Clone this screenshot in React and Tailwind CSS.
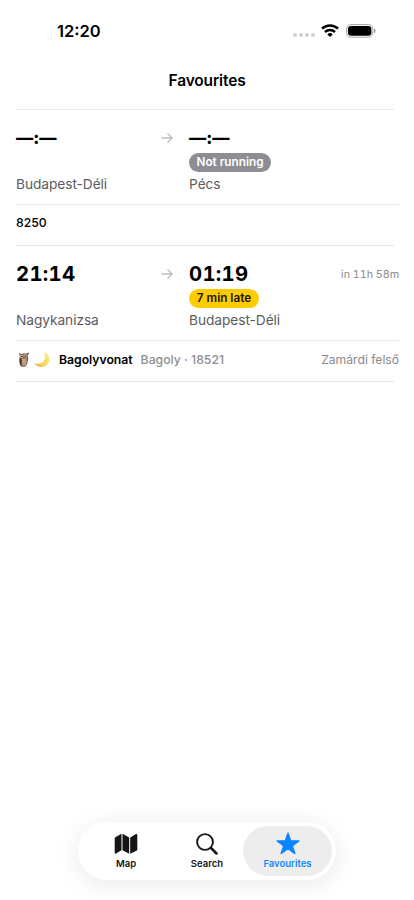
const trips = [
  {
    id: "8250",
    from: { place: "Budapest-Déli" },
    to: { place: "Pécs" },
    status: { text: "Not running", color: "bg-[#8e8d93] text-white", width: "w-[82px]" },
    number: "8250",
  },
  {
    id: "18521",
    from: { time: "21:14", place: "Nagykanizsa" },
    to: { time: "01:19", place: "Budapest-Déli" },
    status: { text: "7 min late", color: "bg-[#fecb00] text-[#1a1500]", width: "w-[70px]" },
    countdown: "in 11h 58m",
    name: "Bagolyvonat",
    line: "Bagoly · 18521",
    nextStop: "Zamárdi felső",
  },
];

function WifiIcon() {
  return (
    <svg className="h-[14px] w-[18px]" viewBox="0 0 18 14" fill="none" stroke="#000" strokeWidth="2.5">
      <path d="M1 4.700a11.500 11.500 0 0 1 16 0" />
      <path d="M4 8a7.200 7.200 0 0 1 10 0" />
      <path d="M9 12.900 6.300 10.400a3.800 3.800 0 0 1 5.400 0Z" fill="#000" stroke="none" />
    </svg>
  );
}

function BatteryIcon() {
  return (
    <svg className="h-[14px] w-[30px]" viewBox="0 0 30 14">
      <rect x="0.6" y="0.6" width="26.2" height="12.6" rx="4.2" fill="none" stroke="#a3a3a3" strokeWidth="1" />
      <rect x="2" y="2" width="23.4" height="9.8" rx="3" fill="#000" />
      <path d="M28 4.7c1 .3 1.5 1.1 1.5 2.2S29 8.8 28 9.1Z" fill="#999" />
    </svg>
  );
}

function ArrowIcon() {
  return (
    <svg
      className="h-3 w-3"
      viewBox="0 0 12 12"
      fill="none"
      stroke="#bdbdbf"
      strokeWidth="1.3"
      strokeLinecap="round"
      strokeLinejoin="round"
    >
      <path d="M.8 6h10.4M6.9 1.7 11.2 6l-4.3 4.3" />
    </svg>
  );
}

function OwlIcon() {
  return (
    <svg className="h-4 w-4" viewBox="0 0 16 16">
      <path d="m2.800 1.200 2.600.6 4.200-.4L13.200.6l-1.300 3.200c.6 2.400.3 6.400-1.500 9.400L7.500 15l-3.200-1.200c-1.200-2.800-1.200-6.600-.5-9.700Z" fill="#765b49" />
      <path d="M6 6.500h4.500c.4 2.600 0 5.200-1.300 7l-2.500.2c-1.200-2-1.300-4.700-.7-7.200Z" fill="#c4ab94" />
      <path d="M4 6.500c-.7 2.300-.3 5.200 1.200 7.300.5-2.500.6-5 .4-6.700Z" fill="#493a32" />
      <circle cx="5.9" cy="4.3" r="1.7" fill="#e6d3b5" />
      <circle cx="9.8" cy="4" r="1.7" fill="#e6d3b5" />
      <circle cx="6" cy="4.3" r=".9" fill="#2b1d17" />
      <circle cx="9.7" cy="4.1" r=".9" fill="#2b1d17" />
      <path d="m7.300 4.800.7 1.500.6-1.500Z" fill="#34261f" />
      <path d="M6.300 8.500h.8M8.500 8.300h.8M6.600 10.300h.8M8.600 10.200h.7M6.600 12h2" stroke="#7d6553" strokeWidth=".6" />
      <path d="M5 14.300h2M8 14.300h2" stroke="#a99778" strokeWidth="1" />
    </svg>
  );
}

function MoonIcon() {
  return (
    <svg className="h-4 w-4" viewBox="0 0 16 16">
      <defs>
        <linearGradient id="moon" x1="1" y1="0" x2="0" y2="1">
          <stop offset="0" stopColor="#ffe680" />
          <stop offset=".55" stopColor="#fad75f" />
          <stop offset="1" stopColor="#dfae43" />
        </linearGradient>
      </defs>
      <path d="M9.800.3c4.900 1.500 6.900 6.500 4.500 10.700-2.800 5-10.200 5.700-14 .2 4.500 1.400 8.600-.2 10.200-3.500C11.900 4.800 11.200 2.300 9.800.3Z" fill="url(#moon)" />
    </svg>
  );
}

function MapIcon() {
  return (
    <svg className="h-[22px] w-6" viewBox="0 0 24 22" fill="#151515">
      <path d="M.7 5.600c0-.8.3-1.300 1-1.700L7.500.8v16.400L2 20.500c-.8.4-1.300.1-1.300-.7Z" />
      <path d="m8.500.8 6.700 3.700v16.300l-6.700-3.600Z" />
      <path d="m16.200 4.500 5.300-3.200c.9-.5 1.800-.1 1.800.8v14.300c0 .6-.3 1-.9 1.300l-6.200 3.100Z" />
    </svg>
  );
}

function SearchIcon() {
  return (
    <svg className="h-[22px] w-[22px]" viewBox="0 0 22 22" fill="none" stroke="#151515" strokeLinecap="round">
      <circle cx="9" cy="9" r="7.9" strokeWidth="1.9" />
      <path d="m15 15 5.500 5.500" strokeWidth="2.5" />
    </svg>
  );
}

function StarIcon() {
  return (
    <svg className="h-6 w-6" viewBox="0 0 24 24" fill="#0a84ff" stroke="#0a84ff" strokeWidth="1.5" strokeLinejoin="round">
      <path d="m12 1.200 2.600 7.700h8.200l-6.600 4.900 2.600 7.700L12 16.700 5.200 21.500l2.600-7.700-6.600-4.900h8.200Z" />
    </svg>
  );
}

function Stop({ stop, children }) {
  return (
    <div className="flex h-[94px] flex-col">
      <div className="mt-[14px] h-7 leading-7 whitespace-nowrap">
        {stop.time ? (
          <span className="text-[20.25px] font-bold tracking-[0.3px] tabular-nums">{stop.time}</span>
        ) : (
          <span className="text-[17.25px] font-extrabold">—:—</span>
        )}
      </div>
      <div className="h-[22px] pt-px">{children}</div>
      <div className="text-[13.75px] leading-5 tracking-[-0.08px] whitespace-nowrap text-[#5c5c5e]">{stop.place}</div>
    </div>
  );
}

function TripCard({ trip }) {
  return (
    <li className="mr-5 ml-4 h-[136px] border-b border-[#e4e4e5]">
      <div className="-mr-[5px] flex h-[95px] border-b border-[#e9e9ea]">
        <div className="w-[145px]">
          <Stop stop={trip.from} />
        </div>
        <div className="w-7 pt-[22px]">
          <ArrowIcon />
        </div>
        <div className="w-[110px]">
          <Stop stop={trip.to}>
            <span
              className={`flex h-[19px] items-center justify-center rounded-full text-[11.75px] font-semibold whitespace-nowrap ${trip.status.width} ${trip.status.color}`}
            >
              {trip.status.text}
            </span>
          </Stop>
        </div>
        {trip.countdown && (
          <div className="ml-auto pt-[21px] text-[10.75px] leading-4 tracking-[-0.05px] whitespace-nowrap text-[#8a8a8e] tabular-nums">
            {trip.countdown}
          </div>
        )}
      </div>
      <div className="-mr-[5px] flex h-10 items-center pb-[3px] text-[12.25px] leading-4">
        {trip.number && <span className="-mt-0.5 font-medium">{trip.number}</span>}
        {trip.name && (
          <>
            <OwlIcon />
            <span className="ml-0.5">
              <MoonIcon />
            </span>
            <span className="ml-[9px] font-semibold tracking-[-0.04px]">{trip.name}</span>
            <span className="ml-2 font-medium text-[#8e8e91]">{trip.line}</span>
            <span className="ml-auto tracking-[-0.06px] text-[#8a8a8e]">{trip.nextStop}</span>
          </>
        )}
      </div>
    </li>
  );
}

function TabBar() {
  return (
    <nav className="mb-5 ml-[78px] flex h-[58px] w-[258px] rounded-full bg-white p-1 text-[#151515] shadow-[0_4px_26px_rgba(0,0,0,0.09)]">
      <div className="flex w-[88px] flex-col items-center pt-[7px]">
        <MapIcon />
        <span className="mt-[3px] text-[9.5px] leading-3 font-semibold">Map</span>
      </div>
      <div className="flex w-[73px] flex-col items-center pt-[7px] pl-px">
        <SearchIcon />
        <span className="mt-[3px] text-[9.5px] leading-3 font-semibold">Search</span>
      </div>
      <div className="flex h-[50px] w-[89px] flex-col items-center rounded-full bg-[#ededed] pt-[6px] text-[#1687fa]">
        <StarIcon />
        <span className="mt-[2px] text-[9.5px] leading-3 font-semibold">Favourites</span>
      </div>
    </nav>
  );
}

export default function App() {
  return (
    <div className="flex h-[900px] w-[414px] flex-col overflow-hidden bg-white font-['Inter',sans-serif] text-black">
      <header className="h-[110px]">
        <div className="flex h-[61px] items-center pr-[38px] pl-[57px]">
          <span className="pt-px text-[16.5px] leading-6 font-semibold">12:20</span>
          <div className="mt-[9px] mr-[6px] ml-auto flex gap-[2px]">
            <i className="size-1 rounded-full bg-[#cfcfcf]" />
            <i className="size-1 rounded-full bg-[#cfcfcf]" />
            <i className="size-1 rounded-full bg-[#cfcfcf]" />
            <i className="size-1 rounded-full bg-[#cfcfcf]" />
          </div>
          <WifiIcon />
          <span className="ml-[7px]">
            <BatteryIcon />
          </span>
        </div>
        <div className="mr-5 ml-4 h-[49px] border-b border-[#e9e9ea] pl-1 text-center text-[15.5px] leading-[40px] font-semibold tracking-[-0.15px]">
          Favourites
        </div>
      </header>
      <ul className="flex-1">
        {trips.map((trip) => (
          <TripCard key={trip.id} trip={trip} />
        ))}
      </ul>
      <TabBar />
    </div>
  );
}
